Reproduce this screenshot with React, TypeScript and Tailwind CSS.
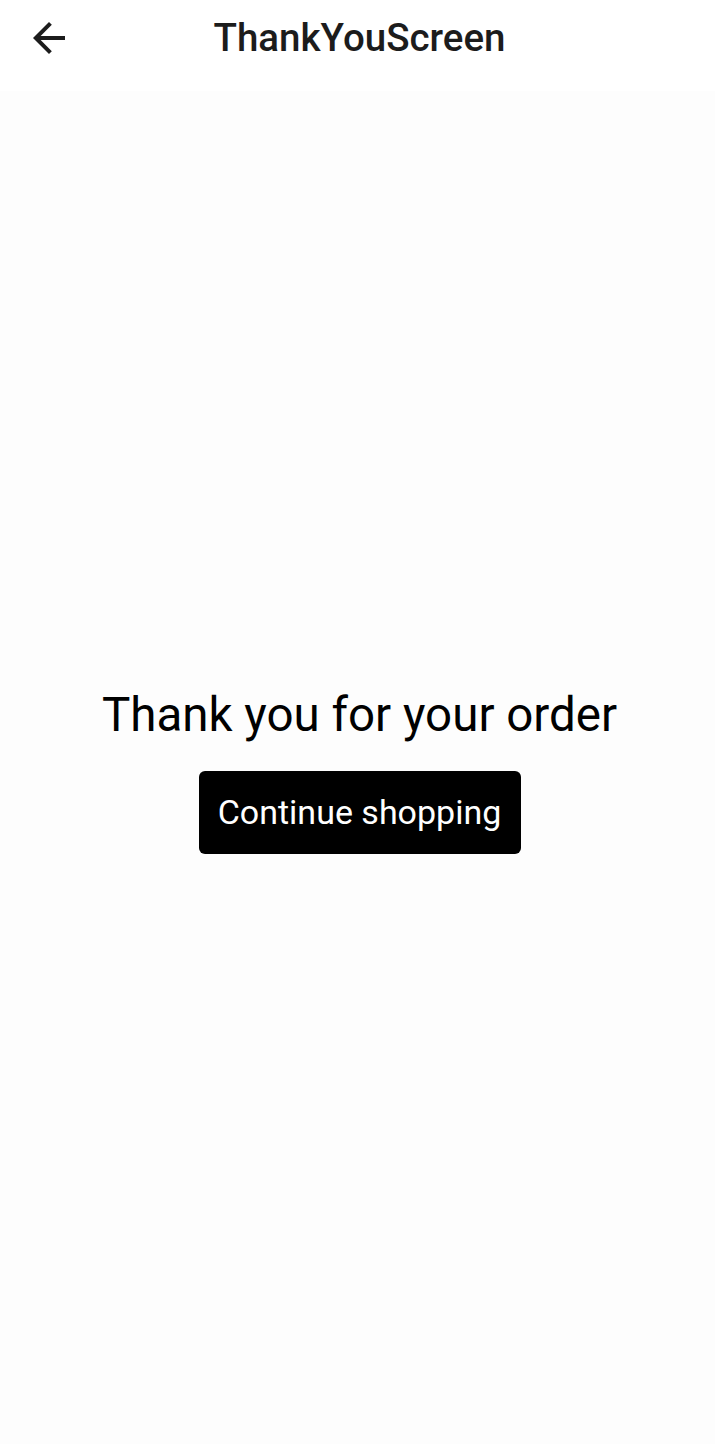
export default function App() {
  return (
    <div className="flex min-h-[1444px] flex-col bg-[#fdfdfd] font-['Roboto',sans-serif] text-black">
      <header className="relative flex h-[91px] items-center justify-center bg-white pb-[15px] pl-[4px]">
        <button className="absolute left-[25px] top-[14px] h-12 w-12 text-[#1c1c1c]" aria-label="back">
          <svg viewBox="0 0 24 24" className="h-12 w-12" fill="currentColor">
            <path d="M20 11H7.83l5.59-5.59L12 4l-8 8 8 8 1.41-1.41L7.83 13H20v-2z" />
          </svg>
        </button>
        <h1 className="text-[38.5px] font-medium leading-none text-[#1c1c1c]">ThankYouScreen</h1>
      </header>
      <main className="flex flex-1 flex-col items-center justify-center gap-[28px] pt-[6px] pl-[4px]">
        <p className="text-[47.5px] leading-[56px]">Thank you for your order</p>
        <button className="flex h-[83px] w-[322px] items-center justify-center rounded-[6px] bg-black text-[34px] text-white">
          Continue shopping
        </button>
      </main>
    </div>
  )
}
